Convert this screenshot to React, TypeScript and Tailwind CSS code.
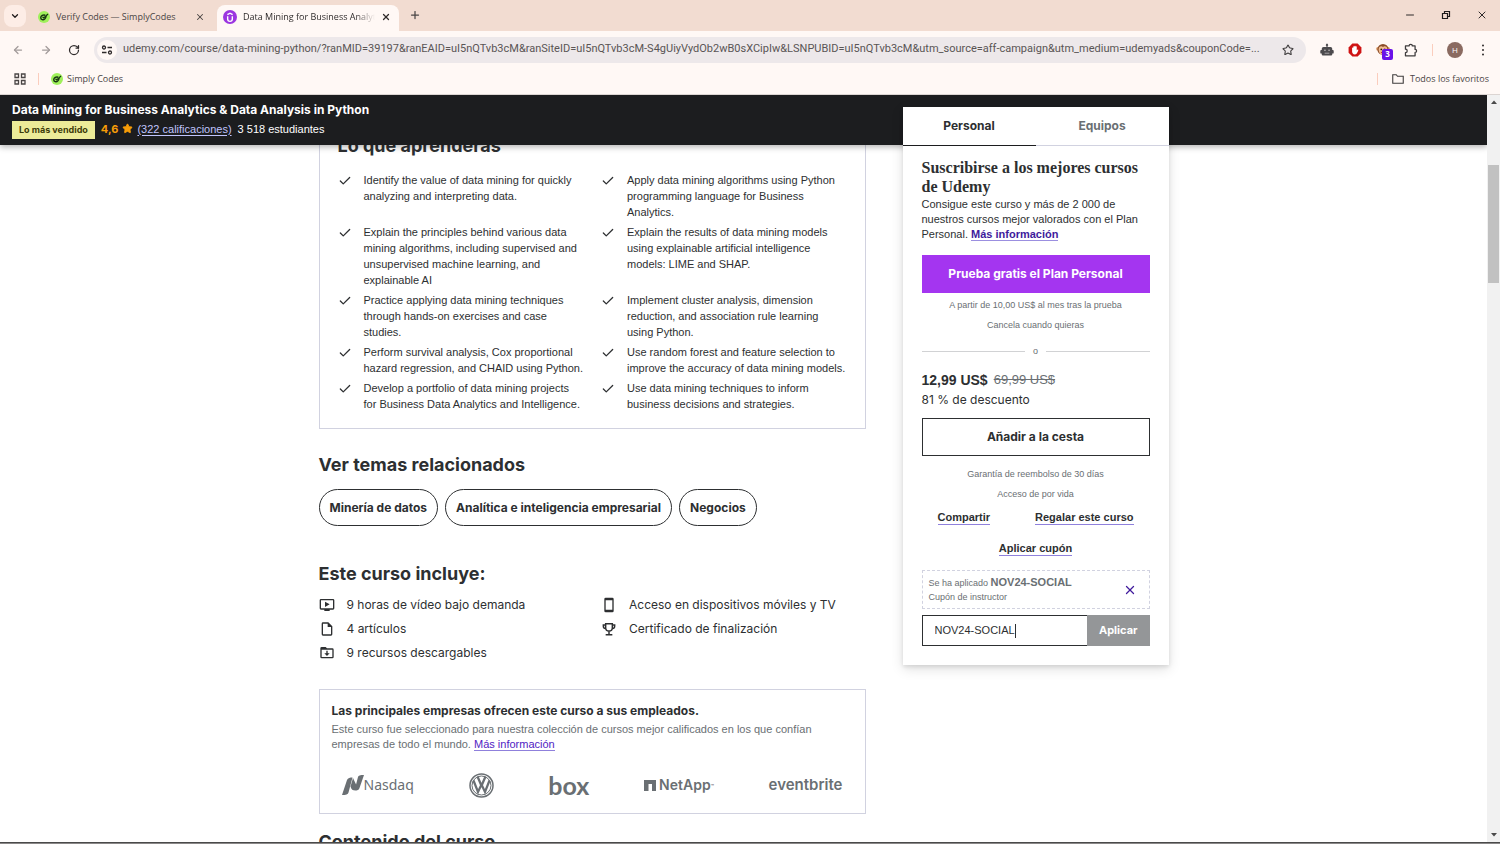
import type { ReactNode } from 'react'
import { ArrowLeft, ArrowRight, Check, ChevronDown, Minus, Plus, RotateCw, Star, X } from 'lucide-react'

const learnItems = [
  'Identify the value of data mining for quickly analyzing and interpreting data.',
  'Apply data mining algorithms using Python programming language for Business Analytics.',
  'Explain the principles behind various data mining algorithms, including supervised and unsupervised machine learning, and explainable AI',
  'Explain the results of data mining models using explainable artificial intelligence models: LIME and SHAP.',
  'Practice applying data mining techniques through hands-on exercises and case studies.',
  'Implement cluster analysis, dimension reduction, and association rule learning using Python.',
  'Perform survival analysis, Cox proportional hazard regression, and CHAID using Python.',
  'Use random forest and feature selection to improve the accuracy of data mining models.',
  'Develop a portfolio of data mining projects for Business Data Analytics and Intelligence.',
  'Use data mining techniques to inform business decisions and strategies.',
]

const topics = ['Minería de datos', 'Analítica e inteligencia empresarial', 'Negocios']

const courseUrl =
  'udemy.com/course/data-mining-python/?ranMID=39197&ranEAID=uI5nQTvb3cM&ranSiteID=uI5nQTvb3cM-S4gUiyVydOb2wB0sXCipIw&LSNPUBID=uI5nQTvb3cM&utm_source=aff-campaign&utm_medium=udemyads&couponCode=...'

function SimplyIcon() {
  return (
    <svg viewBox="0 0 24 24" className="size-3 shrink-0">
      <circle cx="12" cy="12" r="12" fill="#9ff05a" />
      <path d="M14.500 8.500c-4-1.500-9 1-9 5 0 4 5 5 8 2.500 2-1.700 2.500-4 2.500-6" fill="none" stroke="#173312" strokeWidth="2.800" />
      <path d="M9 11.500l2.500 2.500L20 6" fill="none" stroke="#173312" strokeWidth="2.400" />
    </svg>
  )
}

function UdemyIcon() {
  return (
    <svg viewBox="0 0 24 24" className="size-3.5 shrink-0">
      <circle cx="12" cy="12" r="12" fill="#9b35e0" />
      <path d="M8 10.500v5a4 4 0 0 0 8 0v-5M7.500 8L12 5.500 16.500 8" fill="none" stroke="#fff" strokeWidth="2.400" />
    </svg>
  )
}

function SiteSettingsIcon() {
  return (
    <svg viewBox="0 0 12 12" className="size-3" fill="none" stroke="#2f2b2b" strokeWidth="1.300">
      <circle cx="3" cy="3.500" r="1.500" />
      <path d="M6.500 3.500H11M1 8.500h4.500" />
      <circle cx="9" cy="8.500" r="1.500" />
    </svg>
  )
}

function RobotIcon() {
  return (
    <svg viewBox="0 0 24 24" className="size-3.5" fill="#4c4a4d">
      <path d="M11 7V5a2 2 0 1 1 2 0v2h5a3 3 0 0 1 3 3v2h1a1.500 1.500 0 0 1 1.500 1.500v3A1.500 1.500 0 0 1 22 18h-1v1.500a2 2 0 0 1-2 2H5a2 2 0 0 1-2-2V18H2a1.500 1.500 0 0 1-1.500-1.500v-3A1.500 1.500 0 0 1 2 12h1v-2a3 3 0 0 1 3-3z" />
      <circle cx="8.500" cy="12.500" r="1.300" fill="#cfcaca" />
      <circle cx="15.500" cy="12.500" r="1.300" fill="#cfcaca" />
      <path d="M8 17.500h8" stroke="#cfcaca" strokeWidth="1.200" />
    </svg>
  )
}

function BlockerIcon() {
  return (
    <svg viewBox="0 0 24 24" className="size-3.5">
      <path d="M7.500 1h9L23 7.500v9L16.500 23h-9L1 16.500v-9z" fill="#cf1313" />
      <path d="M7 12V8.500a1 1 0 0 1 2 0V6.500a1 1 0 0 1 2 0v-1a1 1 0 0 1 2 0v1a1 1 0 0 1 2 0V13l1-1.500c.8-1 2.200-.5 1.800.5C16.500 15 15.500 19.500 12 19.500c-3.500 0-5-2.500-5-5z" fill="#fff" />
    </svg>
  )
}

function MonkeyIcon() {
  return (
    <svg viewBox="0 0 24 24" className="size-3.5">
      <circle cx="3.500" cy="10" r="3.200" fill="#d9955f" />
      <circle cx="20.500" cy="10" r="3.200" fill="#d9955f" />
      <circle cx="12" cy="11" r="9.500" fill="#8a4c28" />
      <path d="M4.500 11c0-6 5.500-7 7.500-4 2-3 7.500-2 7.500 4 0 6-3.500 9-7.500 9s-7.500-3-7.500-9z" fill="#f0bd92" />
      <circle cx="9" cy="11" r="1.400" fill="#2b1a12" />
      <circle cx="15" cy="11" r="1.400" fill="#2b1a12" />
      <path d="M8.500 15.500q3.500 3 7 0" fill="none" stroke="#b03a2e" strokeWidth="1.800" />
    </svg>
  )
}

function PuzzleIcon() {
  return (
    <svg viewBox="0 0 24 24" className="size-3.5" fill="none" stroke="#3f3c3d" strokeWidth="2.200" strokeLinejoin="round">
      <path d="M2.500 5h6.200a2.800 2.800 0 0 1 5.600 0H19v6a2.500 2.500 0 0 1 0 5.200V22H2.500v-5.500a3 3 0 0 0 0-6z" />
    </svg>
  )
}

function AppsIcon() {
  return (
    <svg viewBox="0 0 12 12" className="size-3" fill="none" stroke="#4a4545" strokeWidth="1.300">
      <path d="M1 1h3.500v3.500H1zM7.500 1H11v3.500H7.500zM1 7.500h3.500V11H1zM7.500 7.500H11V11H7.500z" />
    </svg>
  )
}

function VideoIcon() {
  return (
    <svg viewBox="0 0 24 24" className="size-4" fill="#2d2f31">
      <path d="M3 3h18a2 2 0 0 1 2 2v12a2 2 0 0 1-2 2h-5v2H8v-2H3a2 2 0 0 1-2-2V5a2 2 0 0 1 2-2zm0 2v12h18V5zm6 2l7 4-7 4z" fillRule="evenodd" />
    </svg>
  )
}

function FileIcon() {
  return (
    <svg viewBox="0 0 24 24" className="size-4" fill="#2d2f31">
      <path d="M6 2h8l6 6v12a2 2 0 0 1-2 2H6a2 2 0 0 1-2-2V4a2 2 0 0 1 2-2zm0 2v16h12V9h-5V4z" fillRule="evenodd" />
    </svg>
  )
}

function DownloadsIcon() {
  return (
    <svg viewBox="0 0 24 24" className="size-4" fill="#2d2f31">
      <path d="M4 3h6l2 2h8a2 2 0 0 1 2 2v11a2 2 0 0 1-2 2H4a2 2 0 0 1-2-2V5a2 2 0 0 1 2-2zm0 4v11h16V7zM11 8.500h2v4h3l-4 4-4-4h3z" fillRule="evenodd" />
    </svg>
  )
}

function PhoneIcon() {
  return (
    <svg viewBox="0 0 24 24" className="size-4" fill="#2d2f31">
      <path d="M7 1h10a2 2 0 0 1 2 2v18a2 2 0 0 1-2 2H7a2 2 0 0 1-2-2V3a2 2 0 0 1 2-2zm0 4v14h10V5z" fillRule="evenodd" />
    </svg>
  )
}

function TrophyIcon() {
  return (
    <svg viewBox="0 0 24 24" className="size-4" fill="none" stroke="#2d2f31" strokeWidth="2.200">
      <path d="M7 4h10v6a5 5 0 0 1-10 0zM7 6H3.500v2A3.500 3.500 0 0 0 7 11.500M17 6h3.500v2a3.500 3.500 0 0 1-3.500 3.500M12 15v5M7 20.500h10" />
    </svg>
  )
}

function VolkswagenLogo() {
  return (
    <svg viewBox="0 0 50 50" className="size-[25px]" fill="none" stroke="#6a6f73">
      <circle cx="25" cy="25" r="23" strokeWidth="3" />
      <circle cx="25" cy="25" r="19" strokeWidth="2" />
      <path d="M17 7l6.500 15h3L33 7" strokeWidth="4.500" />
      <path d="M9 15l9 23 6-13h2l6 13 9-23" strokeWidth="4.500" />
    </svg>
  )
}

function Include({ icon, children }: { icon: ReactNode; children: ReactNode }) {
  return (
    <li className="flex h-6 items-center gap-3">
      {icon}
      <span>{children}</span>
    </li>
  )
}

function BrowserChrome() {
  return (
    <div className="shrink-0 border-b border-[#dcd5d2] bg-[#fff8f5] font-['Open_Sans',sans-serif] text-[9px] text-[#4a4545]">
      <div className="flex h-[31px] items-end bg-[#f2dcd1]">
        <button aria-label="Buscar pestañas" className="mb-1 ml-1 flex size-[22px] items-center justify-center rounded-lg bg-[#fdede6]">
          <ChevronDown className="size-2.5 text-[#1f1b1b]" strokeWidth={3} />
        </button>
        <div className="ml-1.5 flex h-[26px] w-[185px] items-center gap-1.5 pr-3 pb-[3px] pl-1.5">
          <SimplyIcon />
          <span className="grow">Verify Codes — SimplyCodes</span>
          <button aria-label="Cerrar"><X className="size-2.5" strokeWidth={2.5} /></button>
        </div>
        <div className="flex h-[26px] w-[182px] items-center gap-1.5 rounded-t-lg bg-[#fff8f5] pr-2 pb-[3px] pl-1.5 text-[#2f2b2b]">
          <UdemyIcon />
          <span className="grow overflow-hidden mask-r-from-85% whitespace-nowrap">Data Mining for Business Analytics</span>
          <button aria-label="Cerrar"><X className="size-2.5" strokeWidth={3} /></button>
        </div>
        <button aria-label="Nueva pestaña" className="mb-2.5 ml-2.5"><Plus className="size-3" strokeWidth={2.5} /></button>
        <div className="mb-2.5 ml-auto flex gap-6 pr-3 text-[#2f2b2b]">
          <button aria-label="Minimizar"><Minus className="size-3" strokeWidth={2} /></button>
          <button aria-label="Restaurar">
            <svg viewBox="0 0 12 12" className="size-3" fill="none" stroke="#1f1b1b" strokeWidth="1.200">
              <path d="M2.500 4.500h5v5h-5zM4.500 4.500V2.500h5v5h-2" />
            </svg>
          </button>
          <button aria-label="Cerrar ventana"><X className="size-3" strokeWidth={2} /></button>
        </div>
      </div>

      <div className="flex h-[37px] items-center pl-3">
        <button aria-label="Atrás" className="mr-4"><ArrowLeft className="size-3 text-[#a39c9b]" strokeWidth={2.5} /></button>
        <button aria-label="Adelante" className="mr-4"><ArrowRight className="size-3 text-[#a39c9b]" strokeWidth={2.5} /></button>
        <button aria-label="Recargar" className="mr-3.5"><RotateCw className="size-3 text-[#2f2b2b]" strokeWidth={2.5} /></button>
        <div className="flex h-[26px] min-w-0 grow items-center gap-1.5 rounded-full bg-[#ede8ea] pr-3 pl-[3px]">
          <span className="flex size-5 shrink-0 items-center justify-center rounded-full bg-[#fff8f5]"><SiteSettingsIcon /></span>
          <input aria-label="Dirección" readOnly value={courseUrl} className="min-w-0 grow bg-transparent font-[Roboto,sans-serif] text-[11px] text-[#5a5555] outline-none" />
          <Star className="size-3 shrink-0 text-[#3f3c3d]" strokeWidth={2.2} />
        </div>
        <div className="ml-3.5 flex items-center gap-3.5">
          <RobotIcon />
          <BlockerIcon />
          <span className="relative">
            <MonkeyIcon />
            <span className="absolute top-1.5 left-1.5 flex size-[11px] items-center justify-center rounded-xs bg-[#6a11e8] text-[8px] font-bold text-white">3</span>
          </span>
          <PuzzleIcon />
        </div>
        <span className="mx-3.5 h-3 w-px bg-[#fbcdbd]" />
        <span className="flex size-4 items-center justify-center rounded-full bg-[#8a6a60] text-[8px] text-white">H</span>
        <button aria-label="Menú" className="mr-[11px] ml-3.5">
          <svg viewBox="0 0 12 12" className="size-3" fill="#2f2b2b">
            <circle cx="6" cy="1.500" r="1" /><circle cx="6" cy="6" r="1" /><circle cx="6" cy="10.500" r="1" />
          </svg>
        </button>
      </div>

      <div className="flex h-[26px] items-center pb-1 pl-3.5">
        <AppsIcon />
        <span className="mx-3 h-3 w-px bg-[#fbcdbd]" />
        <a href="#simply" className="flex items-center gap-1"><SimplyIcon />Simply Codes</a>
        <span className="mr-3.5 ml-auto h-3 w-px bg-[#fbcdbd]" />
        <a href="#favoritos" className="mr-[11px] flex items-center gap-1.5">
          <svg viewBox="0 0 24 20" className="h-2.5 w-3" fill="none" stroke="#3f3c3d" strokeWidth="2.200">
            <path d="M1.500 1.500h7l2.500 3h11.500v14h-21z" />
          </svg>
          Todos los favoritos
        </a>
      </div>
    </div>
  )
}

function CourseHeader() {
  return (
    <header className="relative z-10 bg-[#1c1d1f] px-3 pt-[7px] pb-1.5 text-white shadow-[0_2px_6px_rgba(0,0,0,0.3)]">
      <p className="font-[Inter,sans-serif] text-xs leading-4 font-bold">Data Mining for Business Analytics &amp; Data Analysis in Python</p>
      <div className="mt-[3px] flex h-[18px] items-center gap-1.5 text-[11px] leading-4">
        <span className="bg-[#eceb98] px-[7px] font-[Inter,sans-serif] text-[9px] leading-[18px] font-bold text-[#3d3c0a]">Lo más vendido</span>
        <div className="flex items-center gap-1 pb-[3px]">
          <span className="font-[Inter,sans-serif] font-bold text-[#f69c08]">4,6</span>
          <Star className="size-[11px] fill-[#f69c08] text-[#f69c08]" />
          <a href="#calificaciones" className="text-[#c0c4fc] underline underline-offset-2">(322 calificaciones)</a>
          <span className="ml-0.5">3 518 estudiantes</span>
        </div>
      </div>
    </header>
  )
}

function Purchase() {
  return (
    <aside className="relative z-20 -mt-[38px] w-[266px] shrink-0 self-start bg-white pb-[19px] shadow-[0_2px_4px_rgba(0,0,0,0.1),0_4px_12px_rgba(0,0,0,0.12)]">
      <div role="tablist" className="grid h-[39px] grid-cols-2 font-[Inter,sans-serif] text-xs font-bold">
        <button role="tab" aria-selected="true" className="border-b border-[#1c1d1f]">Personal</button>
        <button role="tab" aria-selected="false" className="border-b border-[#d1d2e0] text-[#6a6f73]">Equipos</button>
      </div>
      <div className="px-[19px] pt-3">
        <h2 className="font-['Liberation_Serif',serif] text-base leading-[19px] font-bold">Suscribirse a los mejores cursos de Udemy</h2>
        <p className="mt-px text-[11px] leading-[15px]">
          Consigue este curso y más de 2 000 de nuestros cursos mejor valorados con el Plan Personal.{' '}
          <a href="#plan" className="border-b border-[#9b8fe0] font-bold text-[#401b9c]">Más información</a>
        </p>
        <button className="mt-[13px] h-[38px] w-full bg-[#a435f0] font-[Inter,sans-serif] text-xs font-bold text-white">Prueba gratis el Plan Personal</button>
        <div className="mt-1.5 flex flex-col gap-2 text-center text-[9px] leading-3 text-[#6a6f73]">
          <p>A partir de 10,00 US$ al mes tras la prueba</p>
          <p>Cancela cuando quieras</p>
        </div>
        <div className="mt-3.5 flex items-center gap-2 text-[9px] leading-3 text-[#6a6f73]">
          <span className="h-px grow bg-[#d1d2d4]" />
          o
          <span className="h-px grow bg-[#d1d2d4]" />
        </div>
        <p className="mt-[13px] flex items-center gap-1.5 text-sm leading-5 font-bold">
          12,99 US$ <s className="text-[13px] font-normal text-[#6a6f73]">69,99 US$</s>
        </p>
        <p className="font-[Inter,sans-serif] text-xs leading-5">81 % de descuento</p>
        <button className="mt-2 h-[38px] w-full border border-[#2d2f31] font-[Inter,sans-serif] text-xs font-bold">Añadir a la cesta</button>
        <div className="mt-3 flex flex-col gap-2 text-center text-[9px] leading-3 text-[#6a6f73]">
          <p>Garantía de reembolso de 30 días</p>
          <p>Acceso de por vida</p>
        </div>
        <div className="mt-2.5 flex justify-between px-4 text-[11px] leading-[14px] font-bold">
          <button className="border-b border-[#8f80dc]">Compartir</button>
          <button className="border-b border-[#8f80dc]">Regalar este curso</button>
        </div>
        <div className="mt-4 text-center text-[11px] leading-[14px] font-bold">
          <button className="border-b border-[#8f80dc]">Aplicar cupón</button>
        </div>
        <div className="mt-3.5 flex items-center justify-between border border-dashed border-[#d1d2e0] py-1 pr-3 pl-1.5 text-[9px] leading-[14px] text-[#6a6f73]">
          <div>
            <p>Se ha aplicado <b className="text-[11px]">NOV24-SOCIAL</b></p>
            <p>Cupón de instructor</p>
          </div>
          <button aria-label="Quitar cupón"><X className="size-3.5 text-[#401b9c]" strokeWidth={2.2} /></button>
        </div>
        <form className="mt-1.5 flex h-[31px]">
          <div className="flex min-w-0 grow items-center border border-r-0 border-[#2d2f31] pl-3">
            <input aria-label="Introducir cupón" defaultValue="NOV24-SOCIAL" className="field-sizing-content min-w-0 text-[11px] outline-none" />
            <span className="h-3.5 w-px bg-[#2d2f31]" />
          </div>
          <button type="button" className="bg-[#949698] px-3 font-[Inter,sans-serif] text-[11px] font-bold text-white">Aplicar</button>
        </form>
      </div>
    </aside>
  )
}

function Companies() {
  return (
    <section className="mt-6 border border-[#d1d2e0] px-3 pt-[13px] pb-[15px]">
      <h2 className="font-[Inter,sans-serif] text-xs leading-4 font-bold">Las principales empresas ofrecen este curso a sus empleados.</h2>
      <p className="mt-[3px] text-[11px] leading-[15px] text-[#6a6f73]">
        Este curso fue seleccionado para nuestra colección de cursos mejor calificados en los que confían empresas de todo el mundo.{' '}
        <a href="#empresas" className="border-b border-[#8f80dc] text-[#5022c3]">Más información</a>
      </p>
      <div className="mt-5 flex h-[26px] items-center justify-between px-2.5 text-[#6a6f73]">
        <span className="flex items-center font-['Noto_Sans',sans-serif] text-sm">
          <svg viewBox="0 0 22 20" className="h-5 w-[22px]" fill="#6a6f73">
            <path d="M5 5c1-2 3-2.500 5.500-2.500L6.500 17.500C6 19.500 4 20 0 20zM11 3l4.500 9.500-2 3c-3 0-4-1-5-4zM16 2c.5-1.500 2-2 6-2l-4.500 13c-.5 2-2 2.500-5 2.500z" />
          </svg>
          Nasdaq
        </span>
        <VolkswagenLogo />
        <span className="font-[Lato,sans-serif] text-[25px] leading-6 font-bold">box</span>
        <span className="flex items-center gap-[3px] font-[Inter,sans-serif] text-sm font-semibold">
          <svg viewBox="0 0 12 11" className="h-[11px] w-3" fill="#6a6f73"><path d="M0 0h12v11H8V4H4.500v7H0z" /></svg>
          <span>NetApp<sup className="text-[5px]">™</sup></span>
        </span>
        <span className="font-[Inter,sans-serif] text-[15px] font-semibold">eventbrite</span>
      </div>
    </section>
  )
}

export default function App() {
  return (
    <div className="flex h-screen flex-col overflow-hidden bg-white font-['Liberation_Sans',Arial,sans-serif] text-[#2d2f31]">
      <BrowserChrome />
      <div className="flex min-h-0 grow">
        <div className="min-w-0 grow overflow-hidden">
          <CourseHeader />
          <div className="mx-auto flex max-w-[850px] gap-[37px]">
            <main className="min-w-0 grow">
              <section className="-mt-[30px] border border-[#d1d2e0] px-[18px] pt-[18px] pb-4">
                <h2 className="font-[Inter,sans-serif] text-lg leading-6 font-bold">Lo que aprenderás</h2>
                <ul className="mt-3.5 grid grid-cols-2 gap-x-[18px] gap-y-1 text-[11px] leading-4">
                  {learnItems.map((item) => (
                    <li key={item} className="flex gap-3">
                      <Check className="mt-0.5 size-3.5 shrink-0" strokeWidth={2.2} />
                      <span>{item}</span>
                    </li>
                  ))}
                </ul>
              </section>

              <h2 className="mt-6 font-[Inter,sans-serif] text-lg leading-6 font-bold">Ver temas relacionados</h2>
              <div className="mt-3 flex gap-[7px]">
                {topics.map((topic) => (
                  <a key={topic} href="#tema" className="rounded-full border border-[#2d2f31] px-2.5 font-[Inter,sans-serif] text-xs leading-[35px] font-bold">{topic}</a>
                ))}
              </div>

              <h2 className="mt-9 font-[Inter,sans-serif] text-lg leading-6 font-bold">Este curso incluye:</h2>
              <div className="mt-[7px] grid grid-cols-2 gap-x-[18px] font-[Inter,sans-serif] text-xs">
                <ul>
                  <Include icon={<VideoIcon />}>9 horas de vídeo bajo demanda</Include>
                  <Include icon={<FileIcon />}>4 artículos</Include>
                  <Include icon={<DownloadsIcon />}>9 recursos descargables</Include>
                </ul>
                <ul>
                  <Include icon={<PhoneIcon />}>Acceso en dispositivos móviles y TV</Include>
                  <Include icon={<TrophyIcon />}>Certificado de finalización</Include>
                </ul>
              </div>

              <Companies />
              <h2 className="mt-4 font-[Inter,sans-serif] text-lg leading-6 font-bold">Contenido del curso</h2>
            </main>
            <Purchase />
          </div>
        </div>

        {/* Scrollbar */}
        <div className="flex w-[13px] shrink-0 flex-col items-center bg-[#f1f1f1] py-1">
          <svg viewBox="0 0 6 6" className="size-1.5" fill="#4a4a4a"><path d="M0 5l3-3.500L6 5z" /></svg>
          <div className="mt-[60px] mb-auto h-[118px] w-[11px] bg-[#c1c1c1]" />
          <svg viewBox="0 0 6 6" className="size-1.5" fill="#4a4a4a"><path d="M0 1l3 3.500L6 1z" /></svg>
        </div>
      </div>
      <div className="h-0.5 shrink-0 border-t border-[#4a4a4a] bg-[#8a8888]" />
    </div>
  )
}
